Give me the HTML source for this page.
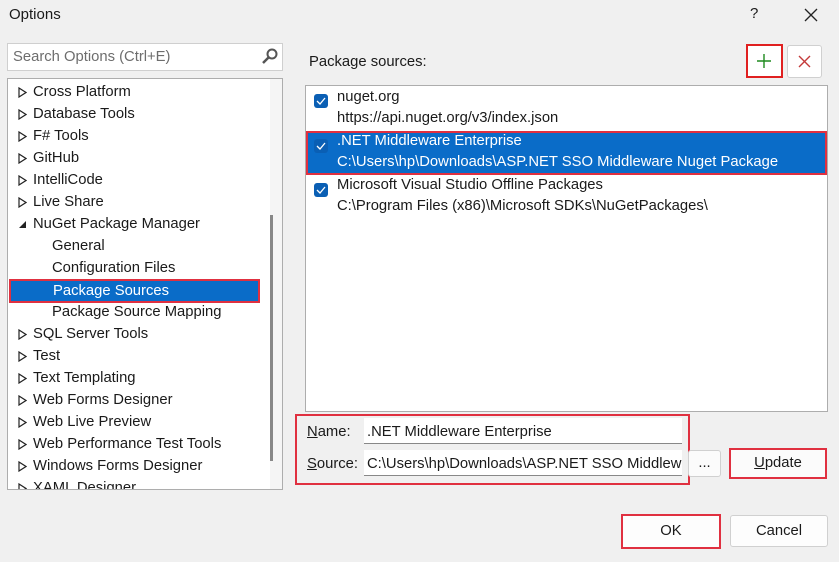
<!DOCTYPE html>
<html><head><style>
*{box-sizing:border-box;margin:0;padding:0}
body{width:839px;height:562px;background:#f0f0f0;font-family:"Liberation Sans",sans-serif;font-size:14.8px;color:#1a1a1a;position:relative;overflow:hidden}
.a{position:absolute;white-space:nowrap}
.row{position:absolute;left:0;height:22px;line-height:22px;white-space:nowrap}
.tri{position:absolute;left:10px;top:6px}
.cb{position:absolute;left:9px;width:14px;height:14px;background:#0a5fb4;border-radius:3px}
.cb svg{position:absolute;left:2px;top:3px}
</style></head><body>
<div class="a" style="left:9px;top:6px;font-size:15px">Options</div>
<div class="a" style="left:750px;top:5px;font-size:15px">?</div>
<svg class="a" style="left:804px;top:8px" width="14" height="14"><path d="M1 1L13 13M13 1L1 13" stroke="#222" stroke-width="1.3"/></svg>

<div class="a" style="left:7px;top:43px;width:276px;height:28px;background:#fff;border:1px solid #cfcfcf"></div>
<div class="a" style="left:13px;top:49px;color:#6d6d6d">Search Options (Ctrl+E)</div>
<svg class="a" style="left:261px;top:47px" width="18" height="18"><circle cx="11" cy="7" r="4.5" fill="none" stroke="#555" stroke-width="2"/><path d="M8 10L2 16" stroke="#555" stroke-width="2.5"/></svg>

<div class="a" style="left:7px;top:78px;width:276px;height:412px;background:#fff;border:1px solid #adadad;overflow:hidden">
<div class="a" style="left:262px;top:0;width:13px;height:412px;background:#f5f5f5"></div>
<div class="a" style="left:262px;top:136px;width:3px;height:246px;background:#888"></div>
<div id="tree"></div>
</div>

<div class="a" style="left:309px;top:54px">Package sources:</div>
<div class="a" style="left:746px;top:44px;width:37px;height:34px;border:2px solid #e02020;background:#fff"></div>
<svg class="a" style="left:756px;top:53px" width="16" height="16"><path d="M8 1V15M1 8H15" stroke="#1e8a1e" stroke-width="1.4"/></svg>
<div class="a" style="left:787px;top:45px;width:35px;height:33px;border:1px solid #d0d0d0;background:#fff;border-radius:3px"></div>
<svg class="a" style="left:798px;top:55px" width="13" height="13"><path d="M1 1L12 12M12 1L1 12" stroke="#c43a3a" stroke-width="1.4"/></svg>

<div class="a" style="left:305px;top:85px;width:523px;height:327px;background:#fff;border:1px solid #adadad"></div>
<div class="cb" style="left:314px;top:94px"><svg width="10" height="8"><path d="M1 4L4 7L9 1" fill="none" stroke="#fff" stroke-width="1.3"/></svg></div>
<div class="a" style="left:337px;top:89px">nuget.org</div>
<div class="a" style="left:337px;top:110px">https://api.nuget.org/v3/index.json</div>
<div class="a" style="left:306px;top:131px;width:521px;height:44px;background:#0a6cc8;border:2px solid #e03040"></div>
<div class="cb" style="left:314px;top:139px;background:#0a5fb4"><svg width="10" height="8"><path d="M1 4L4 7L9 1" fill="none" stroke="#fff" stroke-width="1.3"/></svg></div>
<div class="a" style="left:337px;top:133px;color:#fff">.NET Middleware Enterprise</div>
<div class="a" style="left:337px;top:154px;color:#fff">C:\Users\hp\Downloads\ASP.NET SSO Middleware Nuget Package</div>
<div class="cb" style="left:314px;top:183px"><svg width="10" height="8"><path d="M1 4L4 7L9 1" fill="none" stroke="#fff" stroke-width="1.3"/></svg></div>
<div class="a" style="left:337px;top:177px">Microsoft Visual Studio Offline Packages</div>
<div class="a" style="left:337px;top:198px">C:\Program Files (x86)\Microsoft SDKs\NuGetPackages\</div>

<div class="a" style="left:295px;top:414px;width:395px;height:71px;border:2px solid #e03040"></div>
<div class="a" style="left:307px;top:424px"><u>N</u>ame:</div>
<div class="a" style="left:307px;top:456px"><u>S</u>ource:</div>
<div class="a" style="left:364px;top:418px;width:318px;height:26px;background:#fff;border-bottom:1px solid #888"></div>
<div class="a" style="left:367px;top:424px">.NET Middleware Enterprise</div>
<div class="a" style="left:364px;top:450px;width:318px;height:26px;background:#fff;border-bottom:1px solid #888;overflow:hidden"><span style="position:absolute;left:3px;top:6px;white-space:nowrap">C:\Users\hp\Downloads\ASP.NET SSO Middlew</span></div>
<div class="a" style="left:688px;top:450px;width:33px;height:27px;background:#fbfbfb;border:1px solid #d0d0d0;border-radius:3px;text-align:center;line-height:24px">...</div>
<div class="a" style="left:729px;top:448px;width:98px;height:31px;border:2px solid #e03040;background:#fbfbfb;text-align:center;line-height:27px"><u>U</u>pdate</div>
<div class="a" style="left:621px;top:514px;width:100px;height:35px;border:2px solid #e03040;background:#fdfdfd;text-align:center;line-height:31px">OK</div>
<div class="a" style="left:730px;top:515px;width:98px;height:32px;border:1px solid #d0d0d0;border-radius:3px;background:#fdfdfd;text-align:center;line-height:30px">Cancel</div>

<script>
var items=[["Cross Platform",0],["Database Tools",0],["F# Tools",0],["GitHub",0],["IntelliCode",0],["Live Share",0],["NuGet Package Manager",2],["General",1],["Configuration Files",1],["Package Sources",3],["Package Source Mapping",1],["SQL Server Tools",0],["Test",0],["Text Templating",0],["Web Forms Designer",0],["Web Live Preview",0],["Web Performance Test Tools",0],["Windows Forms Designer",0],["XAML Designer",0]];
var h="";
items.forEach(function(it,i){var t=2+i*22;
if(it[1]==3){h+='<div class="row" style="top:'+t+'px;left:1px;width:251px;height:24px;background:#0a6cc8;border:2px solid #e03040;color:#fff;padding-left:42px;line-height:20px">'+it[0]+'</div>';return;}
var tri=it[1]==0?'<svg class="tri" width="9" height="11"><path d="M1 1L8 5.5L1 10Z" fill="none" stroke="#222" stroke-width="1.2"/></svg>':it[1]==2?'<svg class="tri" width="9" height="11"><path d="M8 2L8 9L1 9Z" fill="#222"/></svg>':'';
h+='<div class="row" style="top:'+t+'px;width:260px;padding-left:'+(it[1]==1?44:25)+'px">'+tri+it[0]+'</div>';});
document.getElementById("tree").innerHTML=h;
</script>
</body></html>
